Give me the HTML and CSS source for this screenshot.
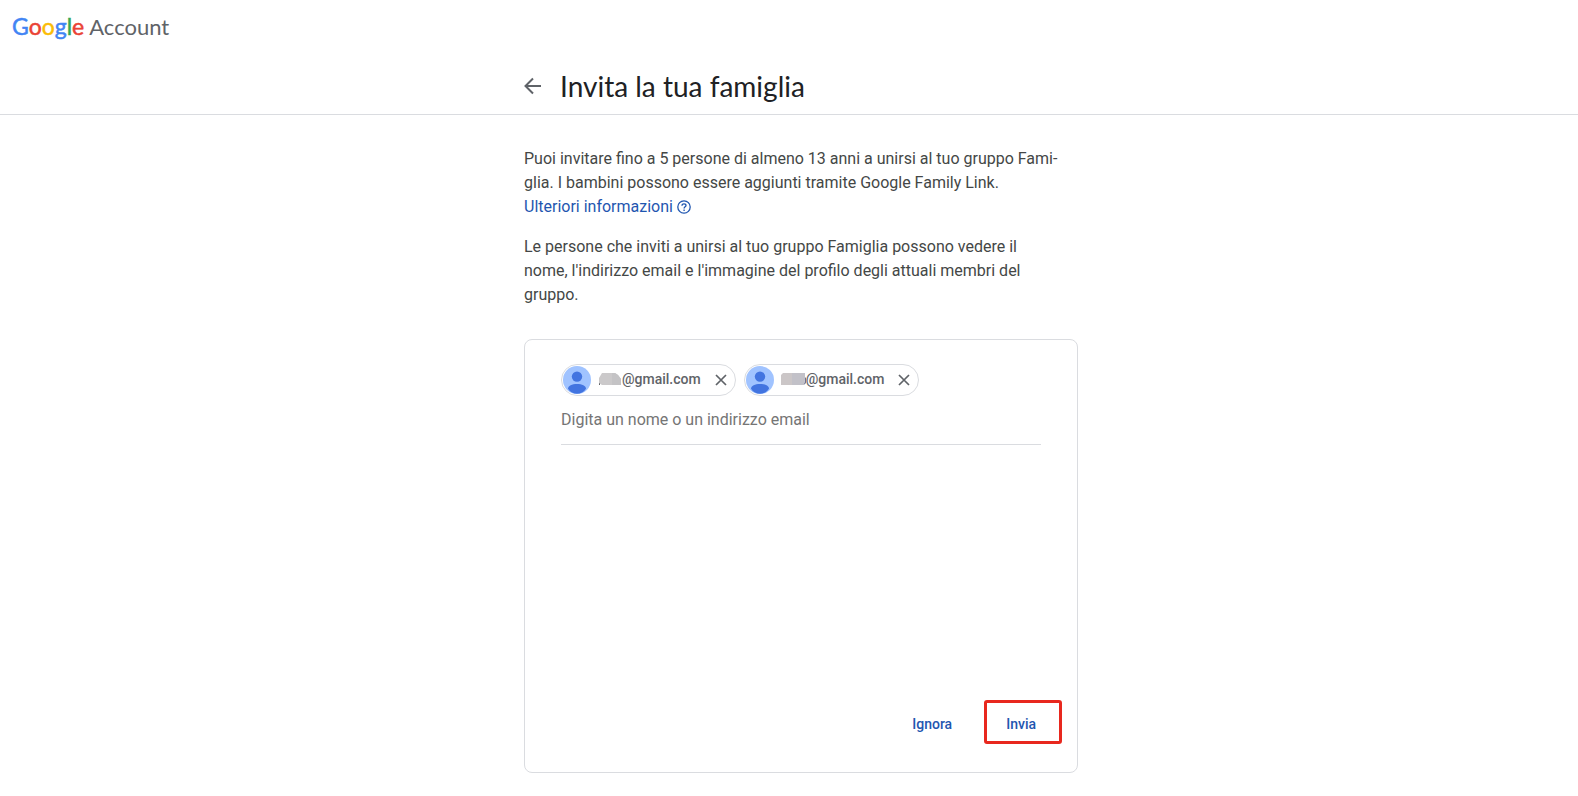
FILE: index.html
```html
<!DOCTYPE html>
<html lang="it">
<head>
<meta charset="utf-8">
<meta name="viewport" content="width=device-width, initial-scale=1">
<title>Invita la tua famiglia</title>
<link rel="stylesheet" href="styles.css">
</head>
<body>
<header class="header">
  <a class="brand" href="#"><span class="wordmark"><span class="blue">G</span><span class="red">o</span><span class="yellow">o</span><span class="blue">g</span><span class="green">l</span><span class="red">e</span></span><span class="product">Account</span></a>
  <div class="titlebar">
    <div class="column title-row">
      <button class="icon-button" type="button" aria-label="Indietro">
        <svg width="18" height="18" viewBox="0 0 18 18" fill="none" stroke="#5f6368" stroke-width="2"><path d="M17 9H2M9 1.500L1.500 9L9 16.500"/></svg>
      </button>
      <h1 class="title">Invita la tua famiglia</h1>
    </div>
  </div>
</header>
<main class="main">
  <div class="column">
    <p class="text">Puoi invitare fino a 5 persone di almeno 13 anni a unirsi al tuo gruppo Fami-<br>glia. I bambini possono essere aggiunti tramite Google Family Link.<br><a class="link" href="#">Ulteriori informazioni<svg class="help" width="14" height="14" viewBox="0 0 14 14" fill="none" stroke="currentColor" stroke-width="1.300"><circle cx="7" cy="7" r="6.200"/><path d="M5 5.700C5 4.500 5.900 3.800 7 3.800S9 4.500 9 5.500C9 6.800 7.100 6.900 7.100 8.500M7.100 9.600V10.900"/></svg></a></p>
    <p class="text">Le persone che inviti a unirsi al tuo gruppo Famiglia possono vedere il<br>nome, l'indirizzo email e l'immagine del profilo degli attuali membri del<br>gruppo.</p>
    <form class="card">
      <div class="recipients">
        <div class="chips">
          <div class="chip">
            <svg class="avatar" width="28" height="28" viewBox="0 0 28 28"><circle cx="14" cy="14" r="14" fill="#a0c3ff"/><circle cx="14" cy="10.600" r="5.200" fill="#4274e0"/><path d="M5 22.800C5 19.700 9 18 14 18S23 19.700 23 22.800C21 26 17.500 27.800 14 27.800S7 26 5 22.800Z" fill="#4274e0"/></svg>
            <span class="address"><svg class="mask" width="24" height="14" viewBox="0 0 24 14"><path d="M1 11h1v2H1zM21 11h2v2h-2z" fill="#5f6368"/><path d="M4 1H17L20 3L23 7V13H4L1 11V6Z" fill="#cbc9ca"/><path d="M14 1H17L20 3L23 7V13H14Z" fill="#c4c3c5"/></svg>@gmail.com</span>
            <button class="remove" type="button" aria-label="Rimuovi"><svg width="12" height="12" viewBox="0 0 12 12" fill="none" stroke="#5f6368" stroke-width="1.700"><path d="M1 1L11 11M11 1L1 11"/></svg></button>
          </div>
          <div class="chip">
            <svg class="avatar" width="28" height="28" viewBox="0 0 28 28"><circle cx="14" cy="14" r="14" fill="#a0c3ff"/><circle cx="14" cy="10.600" r="5.200" fill="#4274e0"/><path d="M5 22.800C5 19.700 9 18 14 18S23 19.700 23 22.800C21 26 17.500 27.800 14 27.800S7 26 5 22.800Z" fill="#4274e0"/></svg>
            <span class="address"><svg class="mask" width="25" height="14" viewBox="0 0 25 14"><path d="M22 5C25.500 5 25.500 12 22 12" fill="none" stroke="#6c7190" stroke-width="1.500"/><path d="M0 3L2 1H24V5L23 13H0Z" fill="#cbc6c7"/><path d="M11 1H24V5L23 13H11Z" fill="#c2c1c8"/></svg>@gmail.com</span>
            <button class="remove" type="button" aria-label="Rimuovi"><svg width="12" height="12" viewBox="0 0 12 12" fill="none" stroke="#5f6368" stroke-width="1.700"><path d="M1 1L11 11M11 1L1 11"/></svg></button>
          </div>
        </div>
        <input class="field" type="text" aria-label="Digita un nome o un indirizzo email" placeholder="Digita un nome o un indirizzo email">
      </div>
      <div class="actions">
        <button class="action" type="button">Ignora</button>
        <button class="action highlighted" type="submit">Invia</button>
      </div>
    </form>
  </div>
</main>
</body>
</html>
```
FILE: styles.css
```css
* { box-sizing: border-box; }

body {
  margin: 0;
  background: #fff;
  color: #444746;
  font-family: Roboto, "Liberation Sans", sans-serif;
}

button {
  border: 0;
  padding: 0;
  background: none;
  cursor: pointer;
}

.header { border-bottom: 1px solid #dadce0; }

.brand {
  display: inline-flex;
  align-items: baseline;
  gap: 5px;
  padding: 10px 12px 0;
  font-family: Lato, Roboto, sans-serif;
  font-size: 22px;
  line-height: 32px;
  color: #5f6368;
  text-decoration: none;
}

.wordmark { font-size: 23px; -webkit-text-stroke: 0.5px; }
.blue { color: #4285f4; }
.red { color: #ea4335; }
.yellow { color: #fbbc05; }
.green { color: #34a853; }

.titlebar, .main { padding-left: 24px; }

.column {
  width: 100%;
  max-width: 554px;
  margin: 0 auto;
}

.title-row {
  display: flex;
  align-items: center;
  gap: 18px;
  padding: 23px 0 8px;
}

.icon-button { display: flex; }

.title {
  margin: 0;
  font-family: Lato, Roboto, sans-serif;
  font-size: 28px;
  font-weight: 400;
  line-height: 40px;
  color: #202124;
}

.main { padding-top: 32px; padding-bottom: 22px; }

.text {
  margin: 0 0 16px;
  font-size: 16px;
  line-height: 24px;
}

.link { color: #1f56b0; text-decoration: none; }
.help { margin-left: 4px; vertical-align: -2px; }

.card {
  display: flex;
  flex-direction: column;
  justify-content: space-between;
  min-height: 434px;
  margin-top: 32px;
  padding: 24px 15px 28px 36px;
  border: 1px solid #dadce0;
  border-radius: 8px;
}

.recipients {
  margin-right: 21px;
  border-bottom: 1px solid #dadce0;
}

.chips { display: flex; flex-wrap: wrap; gap: 8px; }

.chip {
  display: flex;
  align-items: center;
  height: 32px;
  padding: 0 8px 0 1px;
  border: 1px solid #dadce0;
  border-radius: 16px;
}

.address {
  display: flex;
  align-items: center;
  margin: 0 14px 0 7px;
  padding-bottom: 2px;
  font-size: 14px;
  font-weight: 500;
  line-height: 20px;
  color: #5f6368;
}

.remove { display: flex; }

.field {
  display: block;
  width: 100%;
  height: 48px;
  padding: 0 0 1px;
  border: 0;
  outline: 0;
  background: none;
  font-family: Roboto, sans-serif;
  font-size: 16px;
  color: #202124;
}

.field::placeholder { color: #757575; opacity: 1; }

.actions { display: flex; justify-content: flex-end; gap: 8px; }

.action {
  height: 44px;
  padding: 4px 24px 0;
  font-family: Roboto, sans-serif;
  font-size: 14px;
  font-weight: 500;
  color: #1f56b0;
}

.highlighted {
  padding: 4px 23px 0 19px;
  border: 3px solid #e8281e;
  border-radius: 3px;
}
```
